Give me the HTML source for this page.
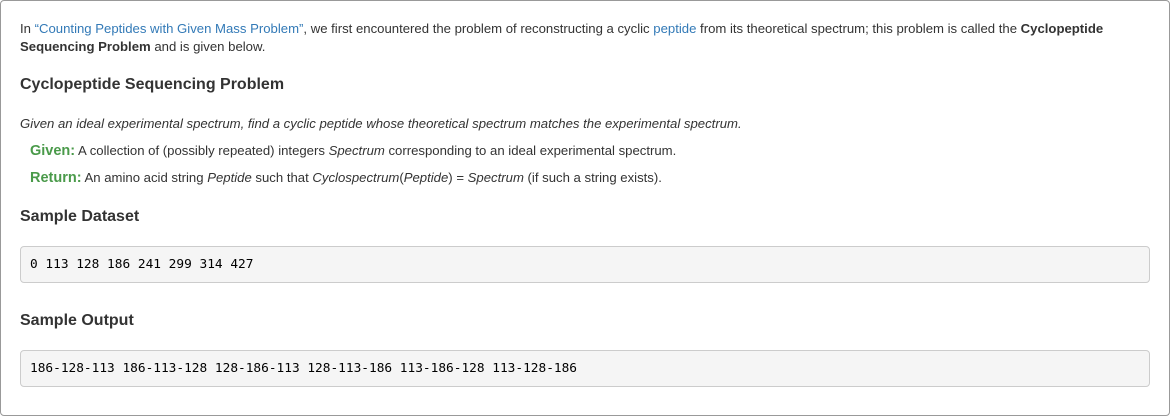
<!DOCTYPE html>
<html><head><style>
body{margin:0;width:1170px;height:416px;background:#fff;font-family:"Liberation Sans",Arial,sans-serif;font-size:13.15px;color:#333;overflow:hidden}
.wrap{position:absolute;left:0;top:0;width:1168px;height:414px;border:1px solid #999;border-radius:4px}
.a{position:absolute;left:20px;white-space:nowrap}
a{color:#337ab7;text-decoration:none}
h{font-weight:bold;font-size:16px}
.g{color:#4a9a4a;font-weight:bold;font-size:14.5px}
pre{position:absolute;left:20px;width:1119px;margin:0;background:#f5f5f5;border:1px solid #ccc;border-radius:4px;padding:0 0 0 9px;font-family:"DejaVu Sans Mono","Liberation Mono",monospace;font-size:12.8px;color:#000;height:35px;line-height:35px}
</style></head><body>
<div class="wrap"></div>
<div class="a" style="top:20px;line-height:18px">In <a>“Counting Peptides with Given Mass Problem”</a>, we first encountered the problem of reconstructing a cyclic <a>peptide</a> from its theoretical spectrum; this problem is called the <b>Cyclopeptide</b><br><b>Sequencing Problem</b> and is given below.</div>
<div class="a" style="top:76px"><h>Cyclopeptide Sequencing Problem</h></div>
<div class="a" style="top:116px"><i>Given an ideal experimental spectrum, find a cyclic peptide whose theoretical spectrum matches the experimental spectrum.</i></div>
<div class="a" style="top:143px;left:30px"><span class="g">Given:</span> A collection of (possibly repeated) integers <i>Spectrum</i> corresponding to an ideal experimental spectrum.</div>
<div class="a" style="top:170px;left:30px"><span class="g">Return:</span> An amino acid string <i>Peptide</i> such that <i>Cyclospectrum</i>(<i>Peptide</i>) = <i>Spectrum</i> (if such a string exists).</div>
<div class="a" style="top:208px"><h>Sample Dataset</h></div>
<pre style="top:246px">0 113 128 186 241 299 314 427</pre>
<div class="a" style="top:312px"><h>Sample Output</h></div>
<pre style="top:350px">186-128-113 186-113-128 128-186-113 128-113-186 113-186-128 113-128-186</pre>
</body></html>
